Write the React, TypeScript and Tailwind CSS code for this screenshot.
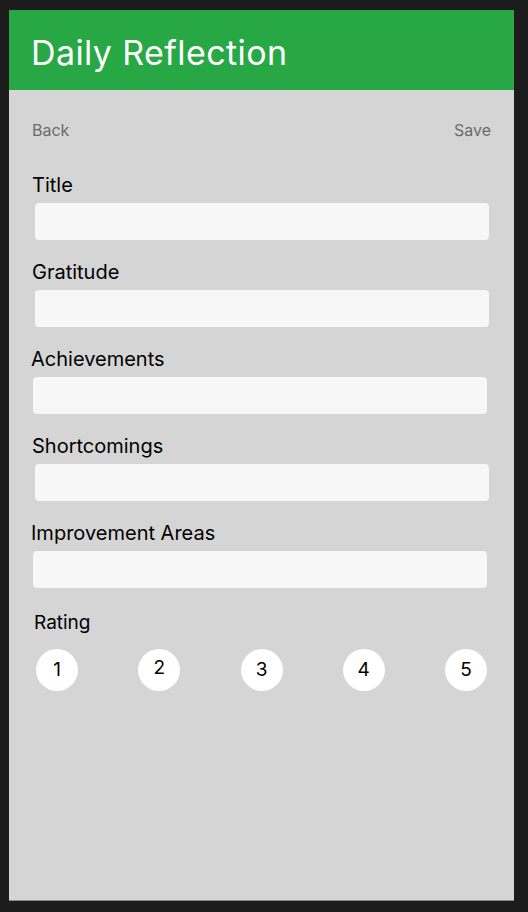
import { useState } from "react"

type Field = {
  label: string
  labelMl: string
  inputMl: string
}

// small per-row offsets, the form isn't perfectly aligned
const FIELDS: Field[] = [
  { label: "Title", labelMl: "ml-[23px]", inputMl: "ml-[26px]" },
  { label: "Gratitude", labelMl: "ml-[23px]", inputMl: "ml-[26px]" },
  { label: "Achievements", labelMl: "ml-[22px]", inputMl: "ml-[24px]" },
  { label: "Shortcomings", labelMl: "ml-[23px]", inputMl: "ml-[26px]" },
  { label: "Improvement Areas", labelMl: "ml-[22px]", inputMl: "ml-[24px]" },
]

export default function App() {
  const [values, setValues] = useState<Record<string, string>>({})
  const [rating, setRating] = useState<number | null>(null)

  return (
    <div
      className="h-[912px] w-full bg-[#1c1c1c] pt-[10px] pl-[9px] pr-[14px]"
      style={{ fontFamily: "Inter, 'Noto Sans', sans-serif" }}
    >
      <div className="flex h-[891px] flex-col border-b border-[#8a8a8a] bg-[#d5d5d5]">
        <header className="flex h-[80px] items-center bg-[#27a845] pl-[22px] pt-[6px]">
          <h1 className="text-[34px] font-normal leading-none tracking-[0.4px] text-white">
            Daily Reflection
          </h1>
        </header>

        <div className="mt-[28px] flex items-center justify-between px-[23px] text-[16px] leading-6 text-[#6b6b6b]">
          <button>Back</button>
          <button>Save</button>
        </div>

        <div className="mt-[29px] flex flex-col gap-[18px]">
          {FIELDS.map((f) => (
            <div key={f.label} className="flex flex-col gap-[4px]">
              <label className={`${f.labelMl} text-[20px] leading-7 text-black`}>{f.label}</label>
              <input
                className={`${f.inputMl} h-[37px] w-[454px] rounded-[4px] bg-[#f7f7f7] px-2 text-[16px] outline-none`}
                value={values[f.label] ?? ""}
                onChange={(e) => setValues({ ...values, [f.label]: e.target.value })}
              />
            </div>
          ))}
        </div>

        <div className="ml-[25px] mt-[21px] text-[19px] leading-7 text-black">Rating</div>

        <div className="ml-[27px] mr-[27px] mt-[12px] flex justify-between">
          {[1, 2, 3, 4, 5].map((n) => (
            <button
              key={n}
              onClick={() => setRating(n)}
              className={`flex h-[42px] w-[42px] items-center justify-center rounded-full text-[19px] text-black ${
                rating === n ? "bg-[#27a845] text-white" : "bg-white"
              }`}
            >
              <span className={n === 2 ? "-mt-[4px]" : ""}>{n}</span>
            </button>
          ))}
        </div>
      </div>
    </div>
  )
}
